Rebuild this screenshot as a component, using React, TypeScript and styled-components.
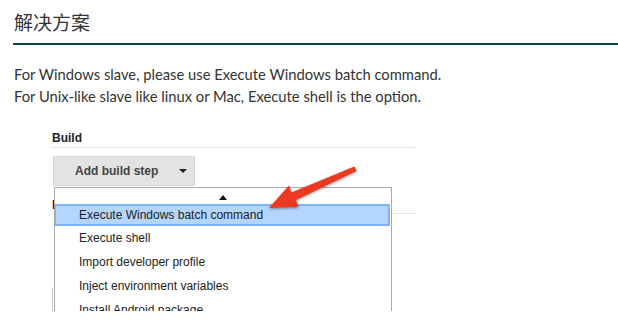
import styled, { createGlobalStyle } from "styled-components";

const GlobalStyle = createGlobalStyle`
  body {
    margin: 0;
    background: #fff;
  }
`

const Page = styled.div`
  width: 618px;
  height: 326px;
  overflow: hidden;
  padding-left: 13px;
  box-sizing: border-box;
`

const Heading = styled.h2`
  margin: 0;
  padding: 10px 0 10px 1px;
  font-family: "Noto Sans CJK SC", sans-serif;
  font-weight: 400;
  font-size: 19px;
  line-height: 23px;
  color: #333;
  border-bottom: 2px solid #0d4848;
`

const Para = styled.p`
  margin: 18px 0 0 1px;
  font-family: Lato, "Liberation Sans", sans-serif;
  font-size: 14.75px;
  line-height: 22px;
  color: #333;
`

// the embedded jenkins screenshot
const Shot = styled.div`
  position: relative;
  margin: 17px 0 0 27px;
  width: 375px;
  height: 187px;
  overflow: hidden;
  background: #fff;
  font-family: "Liberation Sans", Arial, sans-serif;
`

const Section = styled.div`
  padding: 7px 0 0 12px;
`

const SectionTitle = styled.div`
  font-size: 12px;
  font-weight: 700;
  color: #222;
  line-height: 14px;
  padding-bottom: 2px;
  border-bottom: 1px solid #e4e4e4;
`

const AddButton = styled.div`
  margin: 8px 0 0 1px;
  width: 142px;
  height: 30px;
  background: #e3e3e3;
  border: 1px solid #d6d6d6;
  box-sizing: border-box;
  display: flex;
  align-items: center;
  padding-left: 21px;
  gap: 21px;
  font-size: 12px;
  font-weight: 700;
  color: #444;
`

const Caret = styled.span`
  width: 0;
  height: 0;
  border-left: 4px solid transparent;
  border-right: 4px solid transparent;
  border-top: 4px solid #222;
`

const NextSection = styled.div`
  margin-top: 12px;
  font-size: 12px;
  font-weight: 700;
  color: #222;
  line-height: 14px;
  border-bottom: 1px solid #e4e4e4;
  padding-bottom: 1px;
`

const Panel = styled.div`
  margin-top: 74px;
  height: 40px;
  border-left: 1px solid #ccc;
`

const Menu = styled.div`
  position: absolute;
  left: 14px;
  top: 63px;
  width: 338px;
  background: #fff;
  border: 1px solid #a9a9a9;
  box-sizing: border-box;
  font-size: 12px;
  color: #222;
`

const ScrollUp = styled.div`
  height: 16px;
  display: flex;
  justify-content: center;
  align-items: center;
  &::before {
    content: "";
    border-left: 4px solid transparent;
    border-right: 4px solid transparent;
    border-bottom: 5px solid #111;
    margin-top: 2px;
  }
`

const Item = styled.div<{ $active?: boolean }>`
  height: 24px;
  display: flex;
  align-items: center;
  padding-left: 23px;
  box-sizing: border-box;
  background: ${p => (p.$active ? "#b4d5fd" : "transparent")};
  border: 2px solid ${p => (p.$active ? "#7db2f5" : "transparent")};
  border-left-width: 1px;
  ${p => p.$active && "height: 22px; margin-right: 1px;"}
`

const Arrow = styled.svg`
  position: absolute;
  left: 0;
  top: 0;
  filter: drop-shadow(0 1px 1.5px rgba(0, 0, 0, 0.4));
`

const items = [
  "Execute Windows batch command",
  "Execute shell",
  "Import developer profile",
  "Inject environment variables",
  "Install Android package",
]

export default function App() {
  return (
    <Page>
      <GlobalStyle />
      <Heading>解决方案</Heading>
      <Para>
        For Windows slave, please use Execute Windows batch command.
        <br />
        For Unix-like slave like linux or Mac, Execute shell is the option.
      </Para>
      <Shot>
        <Section>
          <SectionTitle>Build</SectionTitle>
          <AddButton>
            Add build step
            <Caret />
          </AddButton>
          <NextSection>Invoke</NextSection>
          <Panel />
        </Section>
        <Menu>
          <ScrollUp />
          {items.map((t, i) => (
            <Item key={t} $active={i === 0}>{t}</Item>
          ))}
        </Menu>
        <Arrow width="375" height="187" viewBox="0 0 375 187">
          <polygon
            fill="#ec3a22"
            points="314.5,42.5 316.5,47 256,76 258.5,83 229,84 249,61.5 251.5,68.5"
          />
        </Arrow>
      </Shot>
    </Page>
  )
}
